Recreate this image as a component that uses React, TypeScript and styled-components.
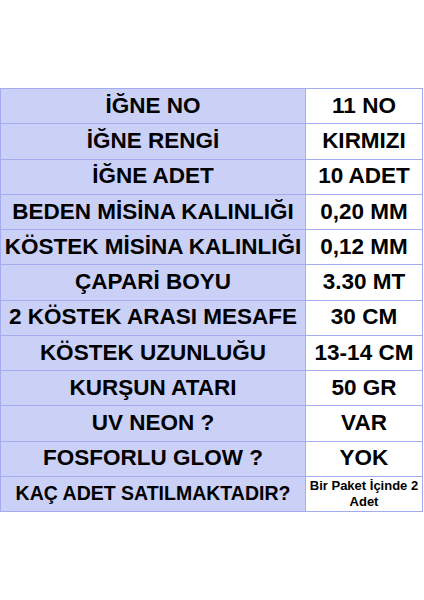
import * as React from 'react';
import styled, { createGlobalStyle } from 'styled-components';

const GlobalStyle = createGlobalStyle`
  html, body {
    margin: 0;
    padding: 0;
    background: #ffffff;
  }
  body {
    font-family: 'Liberation Sans', Arial, sans-serif;
  }
`;

const Page = styled.div`
  width: 424px;
  height: 600px;
  padding-top: 88px;
  box-sizing: border-box;
  overflow: hidden;
`;

const Table = styled.div`
  display: grid;
  grid-template-columns: 304px 1fr;
  grid-auto-rows: 34.25px;
  gap: 1px;
  padding: 1px;
  width: 423px;
  box-sizing: border-box;
  background: #a3acef;
`;

type Size = 'normal' | 'fit' | 'small';

const fontSizes: Record<Size, string> = {
  normal: '22.5px',
  fit: '19.5px',
  small: '13px',
};

const Cell = styled.div<{ $label?: boolean; $size?: Size }>`
  display: flex;
  align-items: center;
  justify-content: center;
  text-align: center;
  background: ${({ $label }) => ($label ? '#cbd0f7' : '#ffffff')};
  color: #000000;
  font-weight: 700;
  font-size: ${({ $size = 'normal' }) => fontSizes[$size]};
  line-height: ${({ $size }) => ($size === 'small' ? '16px' : '1')};
  white-space: ${({ $size }) => ($size === 'small' ? 'normal' : 'nowrap')};
`;

const rows: [string, string][] = [
  ['İĞNE NO', '11 NO'],
  ['İĞNE RENGİ', 'KIRMIZI'],
  ['İĞNE ADET', '10 ADET'],
  ['BEDEN MİSİNA KALINLIĞI', '0,20 MM'],
  ['KÖSTEK MİSİNA KALINLIĞI', '0,12 MM'],
  ['ÇAPARİ BOYU', '3.30 MT'],
  ['2 KÖSTEK ARASI MESAFE', '30 CM'],
  ['KÖSTEK UZUNLUĞU', '13-14 CM'],
  ['KURŞUN ATARI', '50 GR'],
  ['UV NEON ?', 'VAR'],
  ['FOSFORLU GLOW ?', 'YOK'],
  ['KAÇ ADET SATILMAKTADIR?', 'Bir Paket İçinde 2 Adet'],
];

export default function App() {
  return (
    <>
      <GlobalStyle />
      <Page>
        <Table>
          {rows.map(([label, value], i) => {
            const last = i === rows.length - 1;
            return (
              <React.Fragment key={label}>
                <Cell $label $size={last ? 'fit' : 'normal'}>
                  {label}
                </Cell>
                <Cell $size={last ? 'small' : 'normal'}>{value}</Cell>
              </React.Fragment>
            );
          })}
        </Table>
      </Page>
    </>
  );
}
